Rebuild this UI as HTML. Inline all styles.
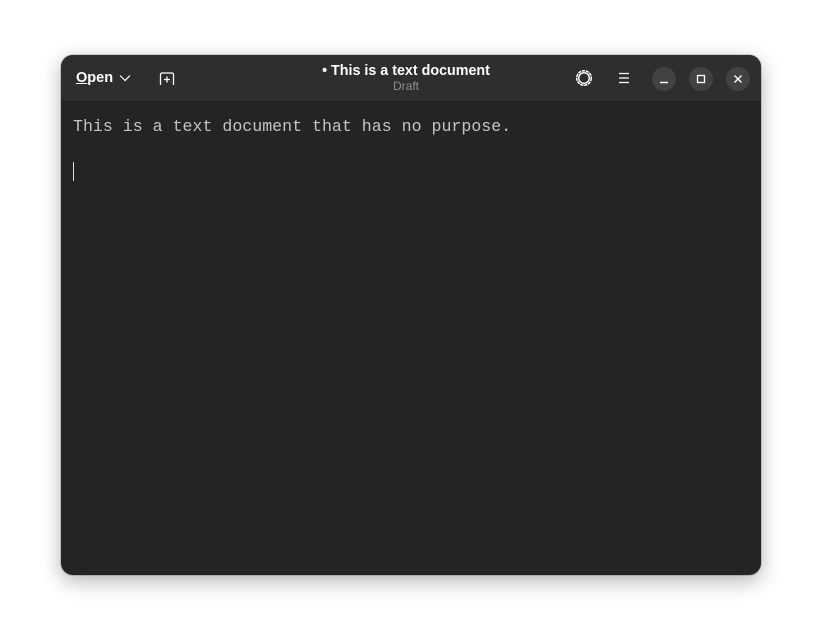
<!DOCTYPE html>
<html><head><style>
html,body{margin:0;width:822px;height:642px;background:#fff;overflow:hidden}
.win{position:absolute;left:61px;top:55px;width:700px;height:520px;border-radius:12px;background:#242424;box-shadow:0 6px 20px rgba(0,0,0,.3),0 0 0 1px rgba(0,0,0,.15);overflow:hidden;font-family:"Liberation Sans",sans-serif}
.hb{position:absolute;left:0;top:0;width:700px;height:46px;background:#2e2e2e;border-bottom:1px solid #1e1e1e}
.open{position:absolute;left:15px;top:15px;color:#fff;font-weight:bold;font-size:14.5px}
.title{position:absolute;left:-5px;width:700px;text-align:center;top:8px;color:#fff;font-weight:bold;font-size:14.3px}
.sub{position:absolute;left:-5px;width:700px;text-align:center;top:24px;color:#8e8e8e;font-size:12px}
.btn{position:absolute;top:12px;width:24px;height:24px;border-radius:50%;background:#424242}
.txt{position:absolute;left:12px;top:62px;font-family:"Liberation Mono",monospace;font-size:16.6px;color:#c4c4c4}
.cur{position:absolute;left:12px;top:107px;width:1px;height:19px;background:#ddd}
</style></head><body>
<div class="win">
<div class="hb">
<div class="open"><u>O</u>pen <svg width="12" height="8" style="margin-left:2px" viewBox="0 0 12 8"><path d="M1 1.5l5 5 5-5" fill="none" stroke="#fff" stroke-width="1.2"/></svg></div>
<svg style="position:absolute;left:98px;top:16px" width="16" height="16" viewBox="0 0 16 16"><path d="M1.5 14V3.5a1.5 1.5 0 0 1 1.5-1.5h10a1.5 1.5 0 0 1 1.5 1.5V14M8 5.5v6M5 8.5h6" fill="none" stroke="#fff" stroke-width="1.3"/></svg>
<div class="title">• This is a text document</div>
<div class="sub">Draft</div>
<svg style="position:absolute;left:514px;top:14px" width="18" height="18" viewBox="0 0 18 18"><circle cx="9" cy="9" r="5.3" fill="none" stroke="#fff" stroke-width="1.4"/><circle cx="9" cy="9" r="7.3" fill="none" stroke="#fff" stroke-width="1.5" stroke-dasharray="3.2 0.8"/></svg>
<svg style="position:absolute;left:556px;top:16px" width="14" height="14" viewBox="0 0 14 14"><path d="M2 2.5h10M2 7h10M2 11.5h10" stroke="#fff" stroke-width="1.3"/></svg>
<div class="btn" style="left:591px"><svg width="24" height="24"><path d="M8 15.5h8" stroke="#fff" stroke-width="1.4"/></svg></div>
<div class="btn" style="left:628px"><svg width="24" height="24"><rect x="8.5" y="8.5" width="7" height="7" fill="none" stroke="#fff" stroke-width="1.3"/></svg></div>
<div class="btn" style="left:665px"><svg width="24" height="24"><path d="M8.5 8.5l7 7M15.5 8.5l-7 7" stroke="#fff" stroke-width="1.4"/></svg></div>
</div>
<div class="txt">This is a text document that has no purpose.</div>
<div class="cur"></div>
</div>
</body></html>
